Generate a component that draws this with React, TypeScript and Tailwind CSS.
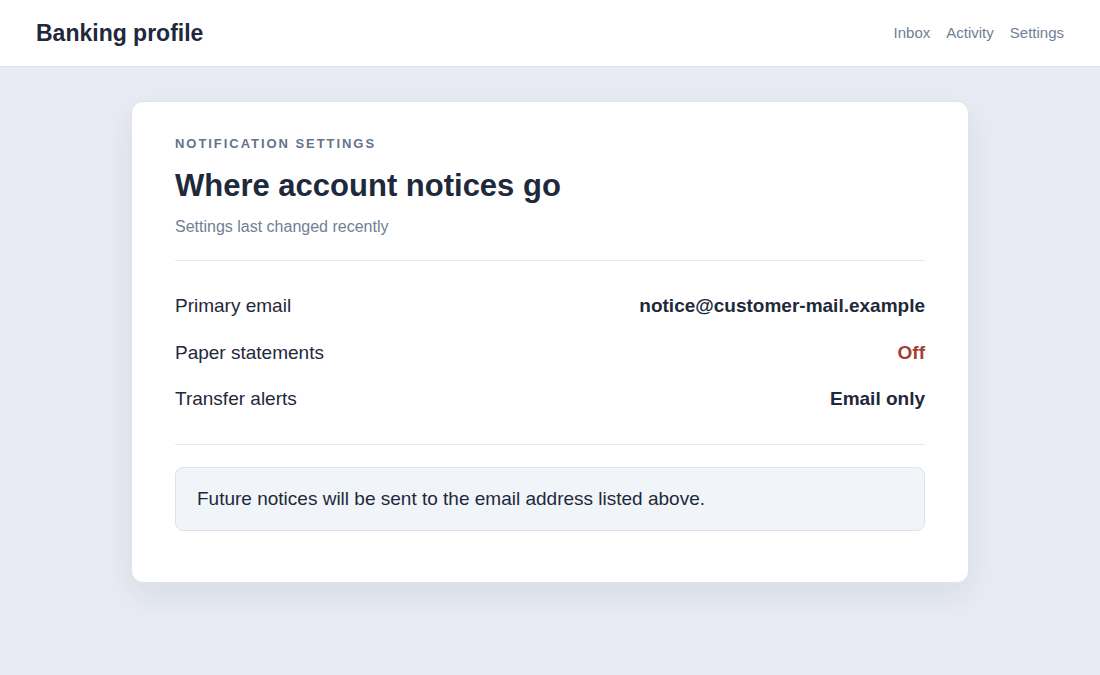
import React from 'react';

const rows = [
  { label: 'Primary email', value: 'notice@customer-mail.example', tone: 'text-[#1e293b]' },
  { label: 'Paper statements', value: 'Off', tone: 'text-[#a3402f]' },
  { label: 'Transfer alerts', value: 'Email only', tone: 'text-[#1e293b]' },
];

const App = () => {
  return (
    <div className="min-h-[675px] bg-[#e8ebf3] font-['Liberation_Sans',Arial,sans-serif]">
      <header className="h-[67px] bg-white border-b border-[#d9dee7] px-9 flex items-center justify-between">
        <h1 className="text-[23px] font-bold text-[#1e293b] leading-none">Banking profile</h1>
        <nav className="flex items-center gap-4 text-[15px] text-[#718096]">
          <a>Inbox</a>
          <a>Activity</a>
          <a>Settings</a>
        </nav>
      </header>

      <main className="pt-[34px] flex justify-center">
        <section className="w-[838px] bg-white border border-[#dfe4ec] rounded-xl px-[43px] pt-[34px] pb-[51px] shadow-[0_12px_32px_rgba(30,41,59,0.08)]">
          <p className="text-[13px] leading-[16px] font-bold tracking-[0.15em] text-[#64748b]">NOTIFICATION SETTINGS</p>
          <h2 className="mt-[15px] text-[31px] leading-[38px] font-bold text-[#1e293b]">Where account notices go</h2>
          <p className="mt-[10px] text-base leading-6 text-[#718096]">Settings last changed recently</p>

          <div className="mt-[21px] border-t border-[#e2e8f0] pt-[22px] pb-[21px]">
            {rows.map((row) => (
              <div key={row.label} className="h-[46.5px] flex items-center justify-between text-[19px] leading-7">
                <span className="text-[#1e293b]">{row.label}</span>
                <span className={`font-bold ${row.tone}`}>{row.value}</span>
              </div>
            ))}
          </div>

          <div className="border-t border-[#e2e8f0]" />

          <div className="mt-[22px] rounded-lg border border-[#dde3ec] bg-[#f1f5f9] px-[21px] py-[17px] text-[19px] leading-7 text-[#1e293b]">
            Future notices will be sent to the email address listed above.
          </div>
        </section>
      </main>
    </div>
  );
};

export default App;
